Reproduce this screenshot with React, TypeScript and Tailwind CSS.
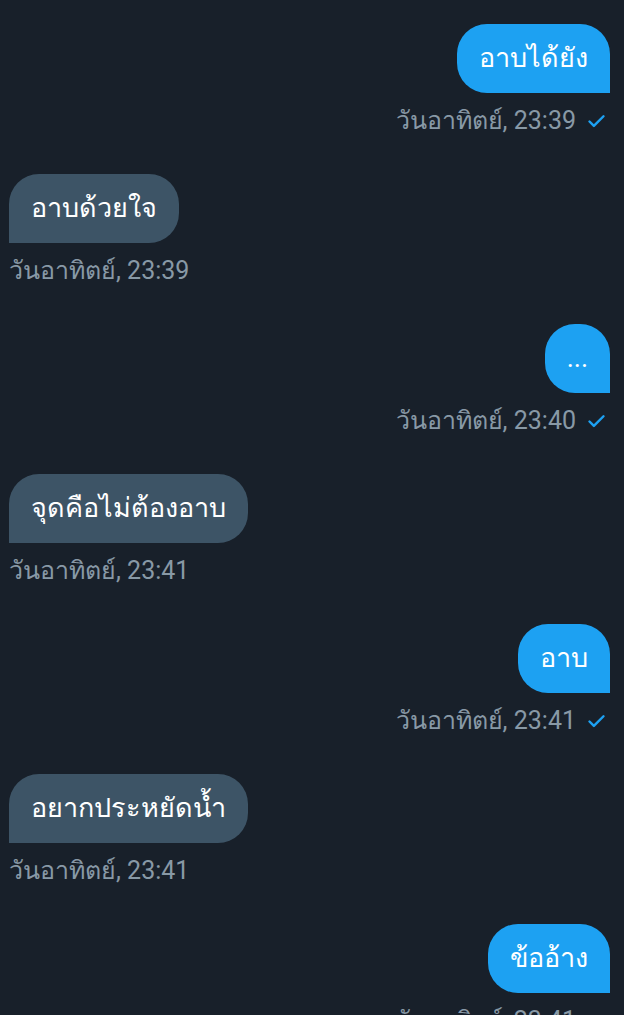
import { Check } from "lucide-react"

type Message = {
  text: string
  time: string
  mine: boolean
}

const messages: Message[] = [
  { text: "อาบได้ยัง", time: "วันอาทิตย์, 23:39", mine: true },
  { text: "อาบด้วยใจ", time: "วันอาทิตย์, 23:39", mine: false },
  { text: "...", time: "วันอาทิตย์, 23:40", mine: true },
  { text: "จุดคือไม่ต้องอาบ", time: "วันอาทิตย์, 23:41", mine: false },
  { text: "อาบ", time: "วันอาทิตย์, 23:41", mine: true },
  { text: "อยากประหยัดน้ำ", time: "วันอาทิตย์, 23:41", mine: false },
  { text: "ข้ออ้าง", time: "วันอาทิตย์, 23:41", mine: true },
]

export default function App() {
  return (
    <div
      className="w-[624px] h-[1015px] overflow-hidden bg-[#18202a] pt-[24px] pl-[9px] pr-[14px]"
      style={{ fontFamily: 'Roboto, "Noto Sans", sans-serif' }}
    >
      {messages.map((m, i) => (
        <div key={i} className={`flex flex-col mb-[38px] ${m.mine ? "items-end" : "items-start"}`}>
          <div
            className={`h-[69px] flex items-center px-[22px] rounded-[30px] text-[27px] text-white ${
              m.mine ? "bg-[#1da1f2] rounded-br-none" : "bg-[#3d5466] rounded-bl-none"
            }`}
          >
            {m.text}
          </div>
          <div className="mt-[13px] h-[30px] flex items-center gap-[10px] text-[25px] text-[#8899a6]">
            <span>{m.time}</span>
            {m.mine && <Check className="w-[21px] h-[21px] text-[#1da1f2] mr-[3px]" strokeWidth={2.8} />}
          </div>
        </div>
      ))}
    </div>
  )
}
